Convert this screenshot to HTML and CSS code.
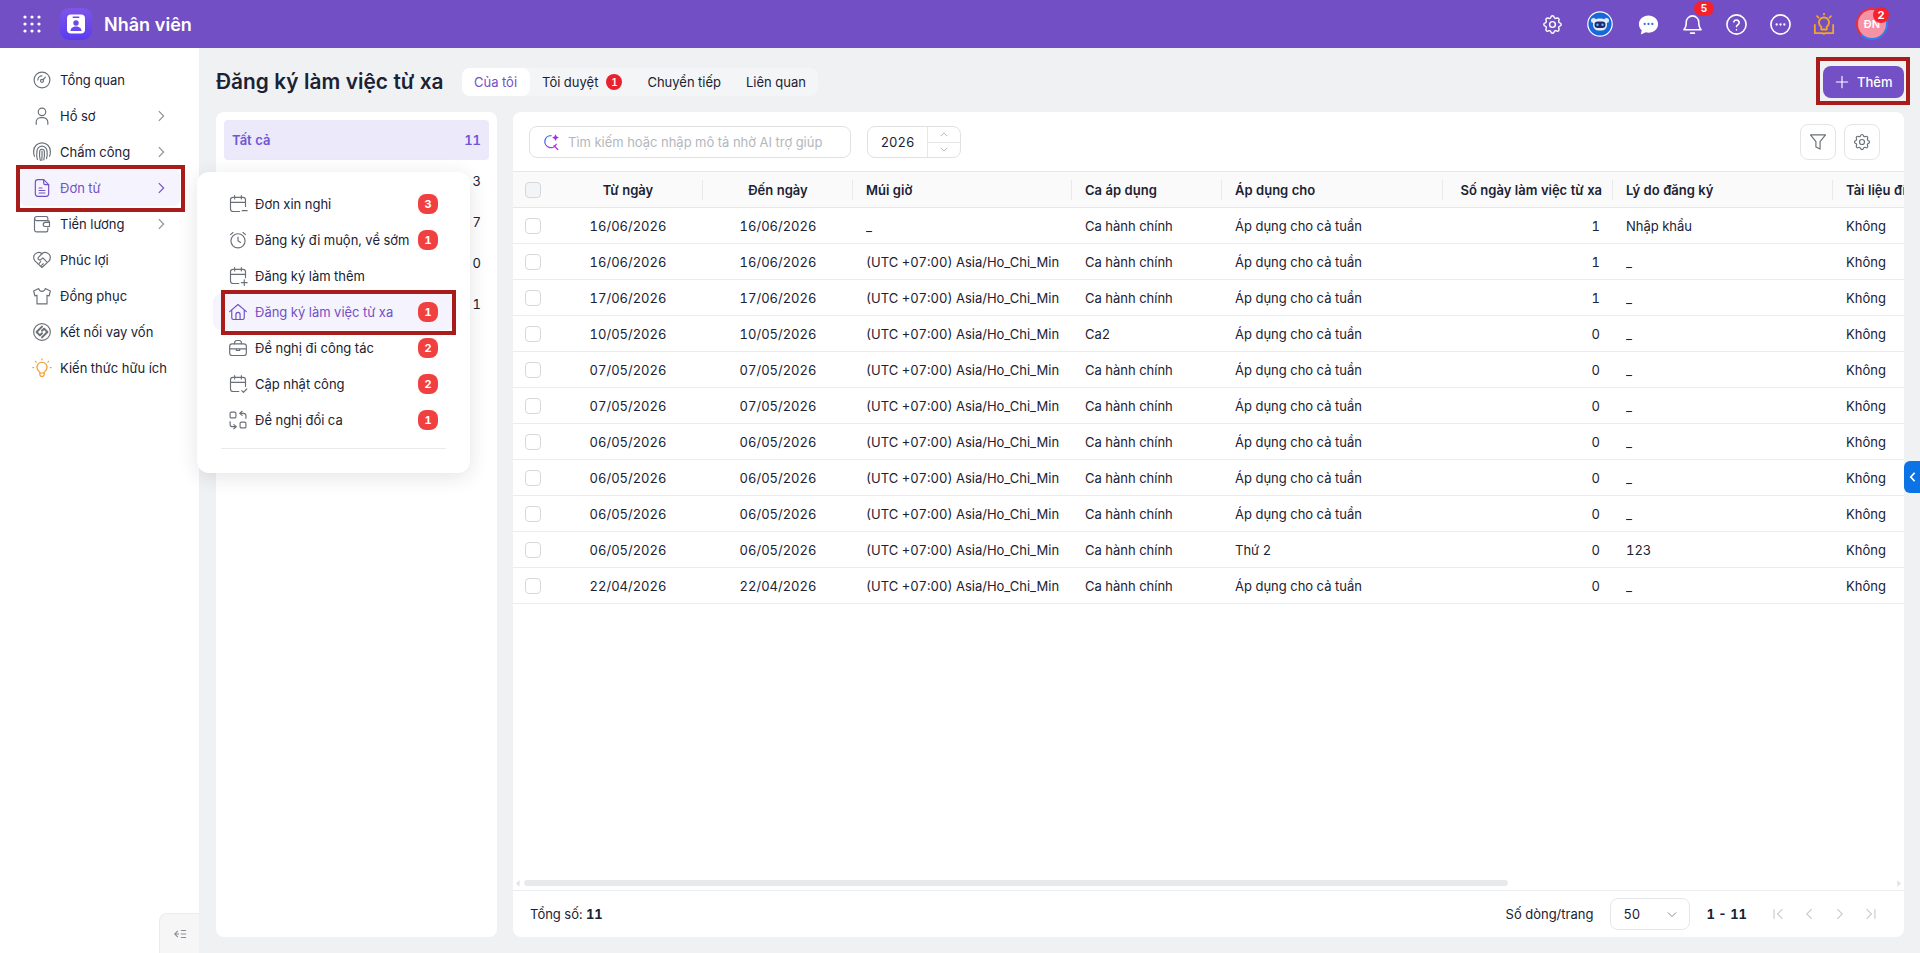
FILE: index.html
```html
<!DOCTYPE html>
<html lang="vi">
  <head>
    <meta charset="UTF-8" />
    <title>Nhân viên</title>
    <link rel="stylesheet" href="styles.css">
  </head>
  <body>
    <header class="topbar">
      <svg class="apps" viewBox="0 0 18 18"><g fill="#fff"><circle cx="2" cy="2" r="1.6"/><circle cx="9" cy="2" r="1.6"/><circle cx="16" cy="2" r="1.6"/><circle cx="2" cy="9" r="1.6"/><circle cx="9" cy="9" r="1.6"/><circle cx="16" cy="9" r="1.6"/><circle cx="2" cy="16" r="1.6"/><circle cx="9" cy="16" r="1.6"/><circle cx="16" cy="16" r="1.6"/></g></svg>
      <svg class="logo" viewBox="0 0 32 32">
        <defs><linearGradient id="logo_bg" x1="0" y1="0" x2="0" y2="1"><stop offset="0%" stop-color="#7d55e8"/><stop offset="100%" stop-color="#5a3cf0"/></linearGradient></defs>
        <rect width="32" height="32" rx="9" fill="url(#logo_bg)"/>
        <rect x="7" y="6.5" width="18" height="19" rx="4" fill="#fff"/>
        <rect x="12.5" y="8.5" width="7" height="1.6" rx=".8" fill="#6a48ee"/>
        <circle cx="16" cy="15" r="2.7" fill="#6a48ee"/>
        <path d="M10.5 23c0-3 2.4-4.6 5.5-4.6s5.500 1.600 5.500 4.600z" fill="#6a48ee"/>
      </svg>
      <div class="app_name">Nhân viên</div>
      <div class="top_icons">
        <svg class="top_icon" viewBox="0 0 24 24" fill="none" stroke="#fff" stroke-width="1.500" stroke-linecap="round" stroke-linejoin="round"><path d="M10.3 4.300c.4-1.800 3-1.800 3.400 0a1.700 1.700 0 0 0 2.600 1.100c1.500-.9 3.300.8 2.400 2.400a1.700 1.700 0 0 0 1 2.500c1.800.4 1.800 3 0 3.400a1.700 1.700 0 0 0-1 2.600c.9 1.500-.9 3.300-2.400 2.400a1.700 1.700 0 0 0-2.600 1c-.4 1.800-3 1.800-3.400 0a1.700 1.700 0 0 0-2.600-1c-1.500.9-3.300-.9-2.400-2.400a1.700 1.700 0 0 0-1-2.600c-1.800-.4-1.800-3 0-3.400a1.700 1.700 0 0 0 1-2.500c-.9-1.600.9-3.300 2.400-2.400a1.700 1.700 0 0 0 2.600-1.100z"/><circle cx="12" cy="12" r="3"/></svg>
        <svg class="robot" viewBox="0 0 26 26"><circle cx="13" cy="13" r="12.200" fill="#1668dc" stroke="#fff" stroke-width="1.200"/><circle cx="6.500" cy="9.500" r="2.500" fill="#dfe8f8"/><circle cx="19.500" cy="9.500" r="2.500" fill="#dfe8f8"/><rect x="6" y="7.500" width="14" height="12" rx="5.500" fill="#e9eefa"/><rect x="7.500" y="10.500" width="11" height="6.500" rx="3.200" fill="#1a2a6c"/><circle cx="10.500" cy="13.700" r="1.200" fill="#6fb4ff"/><circle cx="15.500" cy="13.700" r="1.200" fill="#6fb4ff"/></svg>
        <svg class="top_icon" viewBox="0 0 24 24"><path d="M12 2.500c5.500 0 10 3.900 10 9s-4.500 9-10 9c-1 0-1.900-.1-2.800-.4L4 22.500l.9-4.400C3 16.500 2 14.200 2 11.500c0-5.100 4.500-9 10-9z" fill="#fff"/><g fill="#3b6fe0"><circle cx="8" cy="11.500" r="1.200"/><circle cx="12" cy="11.500" r="1.200"/><circle cx="16" cy="11.500" r="1.200"/></g></svg>
        <div class="bell_box">
          <svg class="top_icon" viewBox="0 0 24 24" fill="none" stroke="#fff" stroke-width="1.600" stroke-linecap="round" stroke-linejoin="round"><path d="M12 3a6.500 6.500 0 0 0-6.500 6.500c0 4.500-1 6.500-2.500 8h18c-1.500-1.500-2.500-3.500-2.500-8A6.500 6.500 0 0 0 12 3z"/><path d="M10 21h4"/></svg>
          <span class="bell_badge">5</span>
        </div>
        <svg class="top_icon" viewBox="0 0 24 24" fill="none" stroke="#fff" stroke-width="1.700" stroke-linecap="round" stroke-linejoin="round"><circle cx="12" cy="12" r="10"/><path d="M9.200 9.200a2.900 2.900 0 0 1 5.600 1c0 1.900-2.800 2.400-2.800 4"/><path d="M12 17.500v.1"/></svg>
        <svg class="top_icon" viewBox="0 0 24 24" fill="none" stroke="#fff" stroke-width="1.700"><circle cx="12" cy="12" r="10"/><g fill="#fff" stroke="none"><circle cx="8" cy="12" r="1.200"/><circle cx="12" cy="12" r="1.200"/><circle cx="16" cy="12" r="1.200"/></g></svg>
        <svg class="book" viewBox="0 0 24 24" fill="none" stroke="#f5a623" stroke-width="2" stroke-linecap="round" stroke-linejoin="round"><path d="M2 13v9h8.500c.8 0 1.500.4 1.500 1 0-.6.700-1 1.500-1H22v-9"/><path d="M9 15a5.500 5.500 0 1 1 6 0v3H9z"/><path d="M12 .5v1M4.500 3.500 6 5M19.500 3.500 18 5"/></svg>
        <div class="avatar_box">
          <div class="avatar">ĐN</div>
          <span class="avatar_badge">2</span>
        </div>
      </div>
    </header>

    <div class="workspace">
      <aside class="sidebar">
        <a class="nav_item"><svg class="nav_icon" viewBox="0 0 24 24"><circle cx="12" cy="12" r="9.500"/><circle cx="12" cy="13" r="1.800"/><path d="M13.300 11.700 16 8.500M7 12a5 5 0 0 1 5-5"/></svg><span>Tổng quan</span></a>
        <a class="nav_item"><svg class="nav_icon" viewBox="0 0 24 24"><circle cx="12" cy="7" r="4.500"/><path d="M5 22v-2.500a5.500 5.500 0 0 1 5.500-5.500h3a5.500 5.500 0 0 1 5.500 5.500V22"/></svg><span>Hồ sơ</span><svg class="nav_arrow" viewBox="0 0 16 16"><path d="m5.500 2.500 5.500 5.500-5.500 5.500"/></svg></a>
        <a class="nav_item"><svg class="nav_icon" viewBox="0 0 24 24"><path d="M3 17c-1-2-1.200-4-1-6A10 10 0 0 1 22 11c.2 2 0 4-1 6"/><path d="M6.500 21C5.500 18 5.500 14 6 11a6 6 0 0 1 12 0c.5 3 .3 6-.5 9"/><path d="M10 22c-1-3-1.200-7-.8-10.500a2.800 2.800 0 0 1 5.600 0c.3 3.500.2 6.500-.6 10"/><path d="M12 11c.2 3.500 0 7-.2 11"/></svg><span>Chấm công</span><svg class="nav_arrow" viewBox="0 0 16 16"><path d="m5.500 2.500 5.500 5.500-5.500 5.500"/></svg></a>
        <a class="nav_item active"><svg class="nav_icon" viewBox="0 0 24 24"><path d="M14 2H7a3 3 0 0 0-3 3v14a3 3 0 0 0 3 3h10a3 3 0 0 0 3-3V8z"/><path d="M14 2v4a2 2 0 0 0 2 2h4M8.500 12H12M8.500 15h7M8.500 18h7"/></svg><span>Đơn từ</span><svg class="nav_arrow" viewBox="0 0 16 16"><path d="m5.500 2.500 5.500 5.500-5.500 5.500"/></svg></a>
        <a class="nav_item"><svg class="nav_icon" viewBox="0 0 24 24"><path d="M19 7V5a2 2 0 0 0-2-2H6a3 3 0 0 0-3 3v13a2.500 2.500 0 0 0 2.500 2.500H17a2 2 0 0 0 2-2v-3"/><path d="M3 6a3 3 0 0 0 3 2h13a2 2 0 0 1 2 2v5h-5a2.500 2.500 0 0 1 0-5h5"/></svg><span>Tiền lương</span><svg class="nav_arrow" viewBox="0 0 16 16"><path d="m5.500 2.500 5.500 5.500-5.500 5.500"/></svg></a>
        <a class="nav_item"><svg class="nav_icon" viewBox="0 0 24 24"><path d="M12 21 3.500 13A5.800 5.800 0 0 1 2 9a6 6 0 0 1 10-4.500A6 6 0 0 1 22 9c0 1.500-.5 2.900-1.500 4z"/><path d="M12 4.500 8 8.500c-1 1-1 2.300 0 3s2.200.7 3-.2l2-1.800 4.500 4.500M8.500 16l2-2M11.500 18.500l2-2"/></svg><span>Phúc lợi</span></a>
        <a class="nav_item"><svg class="nav_icon" viewBox="0 0 24 24"><path d="M8 3 2 6l1.500 6L6 11v10.500h12V11l2.500 1L22 6l-6-3c-.5 2.500-2 3.500-4 3.500S8.500 5.500 8 3z"/></svg><span>Đồng phục</span></a>
        <a class="nav_item"><svg class="nav_icon" viewBox="0 0 24 24"><circle cx="12" cy="12" r="10"/><path d="M12 5.500 5.500 12l4 4 2.500-2.500M12 18.500l6.500-6.500-4-4-2.500 2.500" stroke-width="2.400"/></svg><span>Kết nối vay vốn</span></a>
        <a class="nav_item"><svg class="nav_icon bulb" viewBox="0 0 24 24"><path d="M8.500 16a6 6 0 1 1 7 0c-.7.600-1 1.200-1 2H9.500c0-.8-.3-1.400-1-2z"/><path d="M9.500 18v2a2 2 0 0 0 2 2h1a2 2 0 0 0 2-2v-2M12 1v1M1 11.500h1M22 11.500h1M4 4l1 1M20 4l-1 1"/></svg><span>Kiến thức hữu ích</span></a>
        <div class="collapse_tab">
          <svg viewBox="0 0 16 16" fill="none" stroke="#8a8f98" stroke-width="1.300"><path d="M5.500 4.500 2 8l3.500 3.500M2 8h5M9 4h6M9 8h6M9 12h6"/></svg>
        </div>
      </aside>

      <main class="content">
        <div class="page_head">
          <h1 class="page_title">Đăng ký làm việc từ xa</h1>
          <div class="tabs">
            <a class="tab active">Của tôi</a>
            <a class="tab">Tôi duyệt <span class="tab_badge">1</span></a>
            <a class="tab">Chuyển tiếp</a>
            <a class="tab">Liên quan</a>
          </div>
          <button class="add_button"><svg viewBox="0 0 16 16" fill="none" stroke="#fff" stroke-width="1.300" stroke-linecap="round"><path d="M8 1.500v13M1.500 8h13"/></svg>Thêm</button>
        </div>

        <div class="columns">
          <section class="status_panel">
            <div class="status_row selected"><span>Tất cả</span><span>11</span></div>
            <div class="status_row"><span></span><span>3</span></div>
            <div class="status_row"><span></span><span>7</span></div>
            <div class="status_row"><span></span><span>0</span></div>
            <div class="status_row"><span></span><span>1</span></div>
          </section>

          <section class="table_panel">
            <div class="toolbar">
              <div class="search">
                <svg viewBox="0 0 24 24" fill="none" stroke-width="1.800" stroke-linecap="round"><defs><linearGradient id="ai_grad" x1="0" y1="0" x2="1" y2="1"><stop offset="0%" stop-color="#2f7bf5"/><stop offset="100%" stop-color="#c02ff0"/></linearGradient></defs><path d="M12 3.500a8 8 0 1 0 7 11.500" stroke="url(#ai_grad)"/><path d="m16 17 5 5" stroke="#c02ff0"/><path d="M18 1.500l1.500 3 3 1.500-3 1.500-1.500 3-1.500-3-3-1.500 3-1.500z" fill="#a22ff0"/></svg>
                <span>Tìm kiếm hoặc nhập mô tả nhờ AI trợ giúp</span>
              </div>
              <div class="year_input">
                <span class="year_value">2026</span>
                <div class="year_steps">
                  <div><svg viewBox="0 0 10 6"><path d="m1 5 4-4 4 4"/></svg></div>
                  <div><svg viewBox="0 0 10 6"><path d="m1 1 4 4 4-4"/></svg></div>
                </div>
              </div>
              <div class="tool_buttons">
                <button class="tool_button"><svg viewBox="0 0 24 24"><path d="M3 3.500h18l-6.500 8v9l-5-2.500v-6.500z"/></svg></button>
                <button class="tool_button"><svg viewBox="0 0 24 24"><path d="M10.300 4.300c.4-1.800 3-1.800 3.400 0a1.700 1.700 0 0 0 2.600 1.100c1.500-.9 3.300.8 2.400 2.400a1.700 1.700 0 0 0 1 2.500c1.800.4 1.800 3 0 3.400a1.700 1.700 0 0 0-1 2.600c.9 1.500-.9 3.300-2.400 2.400a1.700 1.700 0 0 0-2.600 1c-.4 1.800-3 1.800-3.400 0a1.700 1.700 0 0 0-2.600-1c-1.500.9-3.300-.9-2.400-2.400a1.700 1.700 0 0 0-1-2.600c-1.800-.4-1.800-3 0-3.400a1.700 1.700 0 0 0 1-2.500c-.9-1.600.9-3.300 2.400-2.400a1.700 1.700 0 0 0 2.600-1.100z"/><circle cx="12" cy="12" r="3"/></svg></button>
              </div>
            </div>

            <div class="table_wrap">
              <table class="data_table">
                <colgroup>
                  <col class="c_check"><col class="c_date"><col class="c_date"><col class="c_zone"><col class="c_shift"><col class="c_apply"><col class="c_days"><col class="c_reason"><col class="c_doc">
                </colgroup>
                <thead>
                  <tr>
                    <th class="check"><i class="box"></i></th>
                    <th class="mid">Từ ngày</th>
                    <th class="mid">Đến ngày</th>
                    <th>Múi giờ</th>
                    <th>Ca áp dụng</th>
                    <th>Áp dụng cho</th>
                    <th class="num">Số ngày làm việc từ xa</th>
                    <th>Lý do đăng ký</th>
                    <th>Tài liệu đính kèm</th>
                  </tr>
                </thead>
                <tbody>
                  <tr><td class="check"><i class="box"></i></td><td class="mid">16/06/2026</td><td class="mid">16/06/2026</td><td>_</td><td>Ca hành chính</td><td>Áp dụng cho cả tuần</td><td class="num">1</td><td>Nhập khẩu</td><td>Không</td></tr>
                  <tr><td class="check"><i class="box"></i></td><td class="mid">16/06/2026</td><td class="mid">16/06/2026</td><td>(UTC +07:00) Asia/Ho_Chi_Minh</td><td>Ca hành chính</td><td>Áp dụng cho cả tuần</td><td class="num">1</td><td>_</td><td>Không</td></tr>
                  <tr><td class="check"><i class="box"></i></td><td class="mid">17/06/2026</td><td class="mid">17/06/2026</td><td>(UTC +07:00) Asia/Ho_Chi_Minh</td><td>Ca hành chính</td><td>Áp dụng cho cả tuần</td><td class="num">1</td><td>_</td><td>Không</td></tr>
                  <tr><td class="check"><i class="box"></i></td><td class="mid">10/05/2026</td><td class="mid">10/05/2026</td><td>(UTC +07:00) Asia/Ho_Chi_Minh</td><td>Ca2</td><td>Áp dụng cho cả tuần</td><td class="num">0</td><td>_</td><td>Không</td></tr>
                  <tr><td class="check"><i class="box"></i></td><td class="mid">07/05/2026</td><td class="mid">07/05/2026</td><td>(UTC +07:00) Asia/Ho_Chi_Minh</td><td>Ca hành chính</td><td>Áp dụng cho cả tuần</td><td class="num">0</td><td>_</td><td>Không</td></tr>
                  <tr><td class="check"><i class="box"></i></td><td class="mid">07/05/2026</td><td class="mid">07/05/2026</td><td>(UTC +07:00) Asia/Ho_Chi_Minh</td><td>Ca hành chính</td><td>Áp dụng cho cả tuần</td><td class="num">0</td><td>_</td><td>Không</td></tr>
                  <tr><td class="check"><i class="box"></i></td><td class="mid">06/05/2026</td><td class="mid">06/05/2026</td><td>(UTC +07:00) Asia/Ho_Chi_Minh</td><td>Ca hành chính</td><td>Áp dụng cho cả tuần</td><td class="num">0</td><td>_</td><td>Không</td></tr>
                  <tr><td class="check"><i class="box"></i></td><td class="mid">06/05/2026</td><td class="mid">06/05/2026</td><td>(UTC +07:00) Asia/Ho_Chi_Minh</td><td>Ca hành chính</td><td>Áp dụng cho cả tuần</td><td class="num">0</td><td>_</td><td>Không</td></tr>
                  <tr><td class="check"><i class="box"></i></td><td class="mid">06/05/2026</td><td class="mid">06/05/2026</td><td>(UTC +07:00) Asia/Ho_Chi_Minh</td><td>Ca hành chính</td><td>Áp dụng cho cả tuần</td><td class="num">0</td><td>_</td><td>Không</td></tr>
                  <tr><td class="check"><i class="box"></i></td><td class="mid">06/05/2026</td><td class="mid">06/05/2026</td><td>(UTC +07:00) Asia/Ho_Chi_Minh</td><td>Ca hành chính</td><td>Thứ 2</td><td class="num">0</td><td>123</td><td>Không</td></tr>
                  <tr><td class="check"><i class="box"></i></td><td class="mid">22/04/2026</td><td class="mid">22/04/2026</td><td>(UTC +07:00) Asia/Ho_Chi_Minh</td><td>Ca hành chính</td><td>Áp dụng cho cả tuần</td><td class="num">0</td><td>_</td><td>Không</td></tr>
                </tbody>
              </table>
            </div>

            <div class="scroll_row">
              <svg viewBox="0 0 5 8"><path d="M4.500 0v8L0 4z"/></svg>
              <div class="scroll_track"><div class="scroll_thumb"></div></div>
              <svg viewBox="0 0 5 8"><path d="M.5 0v8L5 4z"/></svg>
            </div>

            <div class="table_foot">
              <div class="total">Tổng số: <b>11</b></div>
              <div class="pager">
                <span>Số dòng/trang</span>
                <div class="page_size"><span>50</span><svg viewBox="0 0 12 8"><path d="m1 1.500 5 5 5-5"/></svg></div>
                <b class="page_range">1 - 11</b>
                <div class="page_arrows">
                  <svg viewBox="0 0 16 16"><path d="M3.500 2.500v11M13 2.500 7.500 8l5.500 5.500"/></svg>
                  <svg viewBox="0 0 16 16"><path d="M11 2.500 5.500 8l5.500 5.500"/></svg>
                  <svg viewBox="0 0 16 16"><path d="m5 2.500 5.500 5.500L5 13.500"/></svg>
                  <svg viewBox="0 0 16 16"><path d="M12.500 2.500v11M3 2.500 8.500 8 3 13.500"/></svg>
                </div>
              </div>
            </div>
          </section>
        </div>
      </main>
    </div>

    <!-- flyout of "Don tu" -->
    <div class="flyout">
      <a class="fly_item"><svg class="fly_icon" viewBox="0 0 24 24"><path d="M14 21H6a3 3 0 0 1-3-3V7a3 3 0 0 1 3-3h12a3 3 0 0 1 3 3v8M3 10h18M8 2v4M16 2v4M17 20h6"/></svg><span>Đơn xin nghỉ</span><i class="fly_badge">3</i></a>
      <a class="fly_item"><svg class="fly_icon" viewBox="0 0 24 24"><circle cx="12" cy="13" r="8.500"/><path d="M12 8.500V13l3 2M3 5.500 6 3M21 5.500 18 3"/></svg><span>Đăng ký đi muộn, về sớm</span><i class="fly_badge">1</i></a>
      <a class="fly_item"><svg class="fly_icon" viewBox="0 0 24 24"><path d="M13 21H6a3 3 0 0 1-3-3V7a3 3 0 0 1 3-3h12a3 3 0 0 1 3 3v7M3 10h18M8 2v4M16 2v4M16 20h7M19.500 16.500v7"/></svg><span>Đăng ký làm thêm</span></a>
      <a class="fly_item active"><svg class="fly_icon" viewBox="0 0 24 24"><path d="M2 11.500 12 3l10 8.500M4.500 9.500V19a2 2 0 0 0 2 2h11a2 2 0 0 0 2-2V9.500"/><path d="M9.500 21v-6a2.500 2.500 0 0 1 5 0v6"/></svg><span>Đăng ký làm việc từ xa</span><i class="fly_badge">1</i></a>
      <a class="fly_item"><svg class="fly_icon" viewBox="0 0 24 24"><rect x="2" y="7" width="20" height="14" rx="3"/><path d="M8 7V5.500A2.500 2.500 0 0 1 10.500 3h3A2.500 2.500 0 0 1 16 5.500V7M2 13h20M10 13v2h4v-2"/></svg><span>Đề nghị đi công tác</span><i class="fly_badge">2</i></a>
      <a class="fly_item"><svg class="fly_icon" viewBox="0 0 24 24"><path d="M13 21H6a3 3 0 0 1-3-3V7a3 3 0 0 1 3-3h12a3 3 0 0 1 3 3v8M3 10h18M8 2v4M16 2v4M16.500 20l2 2 4-4"/></svg><span>Cập nhật công</span><i class="fly_badge">2</i></a>
      <a class="fly_item"><svg class="fly_icon" viewBox="0 0 24 24"><rect x="2.500" y="2.500" width="7" height="7" rx="1.500"/><rect x="14.500" y="14.500" width="7" height="7" rx="1.500"/><path d="M21.500 10V7a3 3 0 0 0-3-3H14l3-2.500M14 4l3 2.500M2.500 14v3a3 3 0 0 0 3 3H10l-3-2.500M10 20l-3 2.500"/></svg><span>Đề nghị đổi ca</span><i class="fly_badge">1</i></a>
      <div class="fly_line"></div>
    </div>

    <div class="side_tab"><svg viewBox="0 0 10 14"><path d="M7.500 2 3 7l4.500 5"/></svg></div>

    <!-- red marks drawn on the screenshot -->
    <div class="mark mark_nav"></div>
    <div class="mark mark_fly"></div>
    <div class="mark mark_add"></div>
  </body>
</html>
```

FILE: styles.css
```css
* { box-sizing: border-box; }
html, body { height: 100%; }
body {
    margin: 0;
    display: flex;
    flex-direction: column;
    height: 100vh;
    overflow: hidden;
    background: #f0f1f3;
    color: #1a2233;
    font-family: Inter, "Noto Sans", sans-serif;
    font-size: 13px;
    font-variant-numeric: tabular-nums;
}

/* top bar */
.topbar {
    flex: none;
    display: flex;
    align-items: center;
    height: 48px;
    padding-left: 23px;
    background: #724fc4;
}
.apps { width: 18px; height: 18px; }
.logo { width: 32px; height: 32px; margin-left: 19px; }
.app_name {
    margin-left: 12px;
    color: #fff;
    font-size: 18px;
    font-weight: 600;
}
.top_icons {
    display: flex;
    align-items: center;
    gap: 24px;
    margin-left: auto;
    padding-right: 32px;
}
.top_icon { display: block; width: 23px; height: 23px; margin: 0 -1.5px; }
.robot { width: 26px; height: 26px; margin: 0 1px; }
.book { width: 22px; height: 22px; margin: 0 -3px 0 -1px; }
.bell_box, .avatar_box { position: relative; }
.bell_badge {
    position: absolute;
    top: -12px;
    left: 12px;
    width: 20px;
    height: 15px;
    border-radius: 8px;
    background: #f5222d;
    color: #fff;
    font-size: 10px;
    font-weight: 700;
    line-height: 15px;
    text-align: center;
}
.avatar {
    width: 32px;
    height: 32px;
    border-radius: 50%;
    border: 2px solid;
    border-color: #e8303a #2f80ed #2f80ed #e8303a;
    background: #f592a8;
    color: #fff;
    font-size: 11px;
    font-weight: 600;
    line-height: 28px;
    text-align: center;
}
.avatar_badge {
    position: absolute;
    top: -1px;
    left: 17px;
    width: 16px;
    height: 16px;
    border-radius: 50%;
    background: #f5222d;
    color: #fff;
    font-size: 11px;
    font-weight: 700;
    line-height: 16px;
    text-align: center;
}

.workspace { flex: 1; display: flex; min-height: 0; }

/* left nav */
.sidebar {
    position: relative;
    flex: none;
    width: 199px;
    padding: 14px 19px 0 20px;
    background: #fff;
}
.nav_item {
    display: flex;
    align-items: center;
    height: 36px;
    padding-left: 12px;
    border-radius: 6px;
}
.nav_item span { margin-left: 8px; }
.nav_icon {
    flex: none;
    width: 20px;
    height: 20px;
    fill: none;
    stroke: #6b7078;
    stroke-width: 1.400;
    stroke-linecap: round;
    stroke-linejoin: round;
}
.nav_icon.bulb { stroke: #f5982a; }
.nav_arrow {
    width: 14px;
    height: 14px;
    margin-left: auto;
    margin-right: 12px;
    fill: none;
    stroke: #8a8f98;
    stroke-width: 1.300;
}
.nav_item.active { background: #f5f3fd; color: #7350c5; }
.nav_item.active .nav_icon, .nav_item.active .nav_arrow { stroke: #7350c5; }
.collapse_tab {
    position: absolute;
    right: 0;
    bottom: 0;
    display: flex;
    align-items: center;
    justify-content: center;
    width: 40px;
    height: 40px;
    border: 1px solid #ebebeb;
    border-width: 1px 0 0 1px;
    border-top-left-radius: 8px;
    background: #f6f6f6;
}
.collapse_tab svg { width: 14px; height: 14px; }

/* page */
.content {
    flex: 1;
    display: flex;
    flex-direction: column;
    min-width: 0;
    padding: 0 16px 16px 17px;
}
.page_head {
    flex: none;
    display: flex;
    align-items: center;
    height: 64px;
    padding-top: 4px;
}
.page_title { margin: -2px 0 0; font-size: 20.8px; font-weight: 600; }
.tabs {
    display: flex;
    align-items: center;
    gap: 0;
    height: 28px;
    margin-left: 18px;
    border-radius: 8px;
    background: #f4f5f6;
}
.tab {
    display: flex;
    align-items: center;
    gap: 8px;
    height: 28px;
    padding: 0 12.500px;
    border-radius: 8px;
}
.tab.active { background: #fff; color: #7350c5; }
.tab_badge {
    width: 16px;
    height: 16px;
    border-radius: 50%;
    background: #e8222c;
    color: #fff;
    font-size: 10px;
    font-weight: 600;
    line-height: 16px;
    text-align: center;
}
.add_button {
    display: flex;
    align-items: center;
    gap: 8px;
    height: 32px;
    width: 81px;
    margin-left: auto;
    padding: 0 0 0 12px;
    border: 0;
    border-radius: 8px;
    background: #7350c5;
    color: #fff;
    font: 500 13px Inter, sans-serif;
}
.add_button svg { width: 14px; height: 14px; }

.columns { flex: 1; display: flex; gap: 16px; min-height: 0; }

/* status list */
.status_panel {
    flex: none;
    width: 281px;
    padding: 8px;
    border-radius: 8px;
    background: #fff;
}
.status_row {
    display: flex;
    align-items: center;
    justify-content: space-between;
    height: 41px;
    padding: 0 8px;
}
.status_row.selected {
    height: 40px;
    border-radius: 4px;
    background: #ece9fa;
    color: #6f56d6;
    font-weight: 600;
}

/* table */
.table_panel {
    flex: 1;
    display: flex;
    flex-direction: column;
    min-width: 0;
    border-radius: 8px;
    background: #fff;
}
.toolbar {
    flex: none;
    display: flex;
    align-items: center;
    height: 59px;
    padding: 0 24px 0 16px;
}
.search {
    display: flex;
    align-items: center;
    gap: 8px;
    width: 322px;
    height: 32px;
    padding-left: 12px;
    border: 1px solid #dfe1e4;
    border-radius: 8px;
    color: #b3b7bd;
}
.search svg { width: 18px; height: 18px; }
.year_input {
    display: flex;
    width: 94px;
    height: 32px;
    margin-left: 16px;
    border: 1px solid #dfe1e4;
    border-radius: 8px;
}
.year_value { flex: 1; line-height: 30px; text-align: center; }
.year_steps { width: 33px; border-left: 1px solid #e6e7ea; }
.year_steps div { display: flex; align-items: center; justify-content: center; height: 15px; }
.year_steps div + div { border-top: 1px solid #e6e7ea; }
.year_steps svg { width: 8px; height: 5px; fill: none; stroke: #a0a4ab; stroke-width: 1; }
.tool_buttons { display: flex; gap: 8px; margin-left: auto; }
.tool_button {
    display: flex;
    align-items: center;
    justify-content: center;
    width: 36px;
    height: 36px;
    padding: 0;
    border: 1px solid #e4e5e7;
    border-radius: 8px;
    background: #fff;
}
.tool_button svg {
    width: 20px;
    height: 20px;
    fill: none;
    stroke: #6b7078;
    stroke-width: 1.400;
    stroke-linejoin: round;
}

.table_wrap { flex: 1; min-height: 0; overflow: hidden; }
.data_table { table-layout: fixed; width: 1500px; border-collapse: collapse; }
.c_check { width: 40px; }
.c_date { width: 150px; }
.c_zone { width: 219px; }
.c_shift { width: 150px; }
.c_apply { width: 221px; }
.c_days { width: 170px; }
.c_reason { width: 220px; }
.c_doc { width: 180px; }
.data_table th, .data_table td {
    position: relative;
    height: 36px;
    padding: 0 13px;
    white-space: nowrap;
    text-align: left;
}
.data_table td { overflow: clip; overflow-clip-margin: content-box; }
.data_table th {
    border-top: 1px solid #e6e7ea;
    border-bottom: 1px solid #e6e7ea;
    background: #fafafa;
    font-weight: 600;
}
.data_table th::after {
    content: "";
    position: absolute;
    top: 8px;
    right: 0;
    width: 1px;
    height: 20px;
    background: #e9eaec;
}
.data_table th.check::after { display: none; }
.data_table td { border-bottom: 1px solid #ebecee; }
.data_table .mid { text-align: center; }
.data_table .num { text-align: right; }
.data_table th.num { padding-right: 11px; }
.data_table .check { padding: 0 0 0 12px; overflow: visible; }
.box {
    display: block;
    width: 16px;
    height: 16px;
    border: 1.500px solid #d5d7db;
    border-radius: 4px;
    background: #fff;
}
.data_table th .box { background: #f3f4f5; }

.scroll_row {
    flex: none;
    display: flex;
    align-items: center;
    gap: 4px;
    height: 14px;
    padding: 0 3px;
}
.scroll_row svg { flex: none; width: 4px; height: 7px; fill: #e0e1e4; }
.scroll_track { flex: 1; }
.scroll_thumb { width: 984px; height: 6px; border-radius: 3px; background: #e8e9eb; }

.table_foot {
    flex: none;
    display: flex;
    align-items: center;
    justify-content: space-between;
    height: 47px;
    padding: 0 26px 0 17px;
    border-top: 1px solid #ebecee;
}
.pager { display: flex; align-items: center; }
.page_size {
    display: flex;
    align-items: center;
    justify-content: space-between;
    width: 80px;
    height: 32px;
    margin-left: 17px;
    padding: 0 12px;
    border: 1px solid #e6e7ea;
    border-radius: 8px;
}
.page_size svg { width: 10px; height: 7px; fill: none; stroke: #8a8f98; stroke-width: 1.200; }
.page_range { margin-left: 16px; font-weight: 700; }
.page_arrows { display: flex; gap: 17px; margin-left: 24px; }
.page_arrows svg { width: 14px; height: 14px; fill: none; stroke: #c8cad0; stroke-width: 1.300; }

/* flyout */
.flyout {
    position: absolute;
    top: 172px;
    left: 197px;
    width: 273px;
    height: 301px;
    padding: 14px 16px 0;
    border-radius: 12px;
    background: #fff;
    box-shadow: 0 4px 20px rgba(30, 30, 50, 0.12);
}
.fly_item {
    display: flex;
    align-items: center;
    height: 36px;
    padding: 0 16px 0 15px;
    border-radius: 8px;
}
.fly_item span { margin-left: 7px; }
.fly_icon {
    flex: none;
    width: 20px;
    height: 20px;
    fill: none;
    stroke: #6b7078;
    stroke-width: 1.400;
    stroke-linecap: round;
    stroke-linejoin: round;
}
.fly_item.active { background: #f5f3fd; color: #7350c5; }
.fly_item.active .fly_icon { stroke: #7350c5; }
.fly_badge {
    width: 20px;
    height: 20px;
    margin-left: auto;
    border-radius: 8px;
    background: #f04040;
    color: #fff;
    font-size: 11px;
    font-style: normal;
    font-weight: 700;
    line-height: 20px;
    text-align: center;
}
.fly_line { height: 1px; margin: 10px 8px 0; background: #e9eaec; }

.side_tab {
    position: absolute;
    top: 461px;
    right: 0;
    display: flex;
    align-items: center;
    justify-content: center;
    width: 16px;
    height: 32px;
    border-radius: 6px 0 0 6px;
    background: #0b73e6;
}
.side_tab svg { width: 9px; height: 12px; fill: none; stroke: #fff; stroke-width: 2; }

/* annotation boxes */
.mark { position: absolute; border: 4px solid #a81c1c; }
.mark_nav { top: 165px; left: 16px; width: 169px; height: 47px; }
.mark_fly { top: 290px; left: 221px; width: 235px; height: 45px; }
.mark_add { top: 57px; left: 1816px; width: 94px; height: 48px; }
```
